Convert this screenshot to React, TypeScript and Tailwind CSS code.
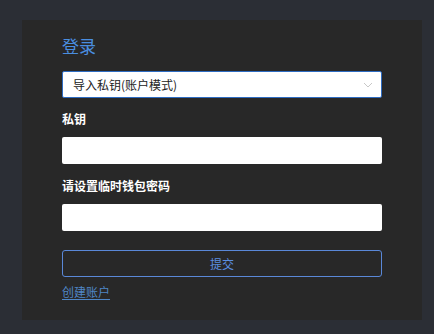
import React from "react";

export default function App() {
  const font = { fontFamily: '"Noto Sans CJK SC", "Noto Sans", sans-serif' };
  return (
    <div className="w-[434px] h-[334px] bg-[#2b2e35] pt-[20px] pl-[22px]" style={font}>
      <div className="w-[400px] h-[300px] bg-[#282828] px-[40px] pt-[14px] flex flex-col">
        <div className="text-[17px] leading-[24px] text-[#4a8ee0]">登录</div>
        <div className="mt-[13px] h-[27px] bg-white border border-[#2e6cc2] rounded-[2px] flex items-center justify-between pl-[10px] pr-[8px]">
          <span className="text-[12px] leading-[18px] text-[#222]">导入私钥(账户模式)</span>
          <svg width="10" height="6" viewBox="0 0 10 6" fill="none">
            <path d="M1 1l4 4 4-4" stroke="#c8c8c8" strokeWidth="1" />
          </svg>
        </div>
        <div className="mt-[12px] text-[12px] leading-[18px] font-bold text-white">私钥</div>
        <div className="mt-[9px] h-[27px] bg-white rounded-[2px]" />
        <div className="mt-[13px] text-[12px] leading-[18px] font-bold text-white">请设置临时钱包密码</div>
        <div className="mt-[9px] h-[27px] bg-white rounded-[2px]" />
        <div className="mt-[19px] h-[27px] border border-[#5a88d8] rounded-[3px] flex items-center justify-center text-[12px] text-[#5b8ee0]">
          提交
        </div>
        <div className="mt-[4px] leading-[18px]">
          <span className="text-[12px] leading-[18px] text-[#4f86c6] underline underline-offset-2">创建账户</span>
        </div>
      </div>
    </div>
  );
}
